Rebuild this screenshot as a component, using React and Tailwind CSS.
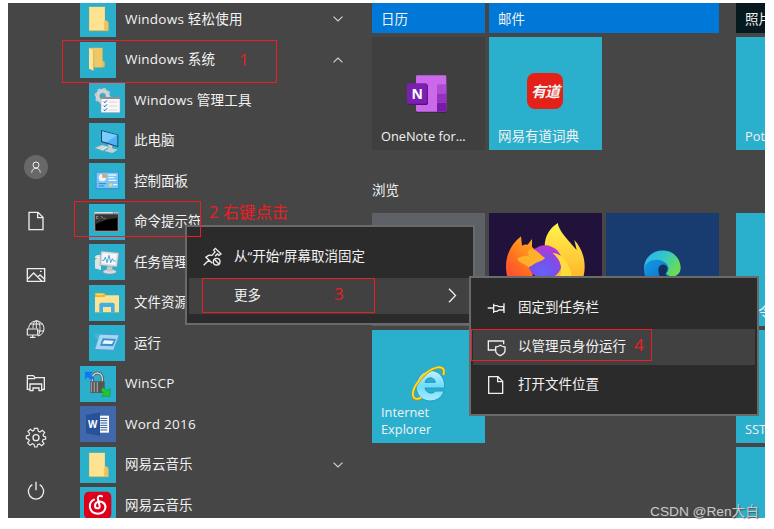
import React from "react";

const Folder = () => (
  <g>
    <path d="M27 17H75V58L85 66V90H27Z" fill="#e9c768" />
    <path d="M28 18H74V88H28Z" fill="#ffe391" />
    <path d="M73 64L78 57L85 63V88L82 90H73Z" fill="#ebc25d" />
    <path d="M27 89H84" stroke="#dcb34d" strokeWidth="2" />
  </g>
);
const OpenFolder = () => (
  <g>
    <path d="M28 17H68V56L74 59V76H38Z" fill="#e6bd55" />
    <path d="M40 18H66V76H40Z" fill="#edc867" />
    <path d="M27 18L41 25V86L27 80Z" fill="#ffe598" />
    <path d="M41 25V86" stroke="#cf9f3b" strokeWidth="2" />
  </g>
);
const Tools = () => (
  <g>
    <circle cx="41" cy="42" r="15" fill="none" stroke="#d0d5d8" strokeWidth="13" />
    <circle cx="41" cy="42" r="21" fill="none" stroke="#c3c9cd" strokeWidth="7" strokeDasharray="8.2 8.3" />
    <circle cx="41" cy="42" r="9" fill="none" stroke="#8b959b" strokeWidth="2" />
    <rect x="36" y="46" width="57" height="46" fill="#f7f7f7" stroke="#99a" strokeWidth="1.5" />
    <rect x="36" y="45" width="57" height="6" fill="#8a9096" />
    <path d="M44 59l4 3 6-7M44 71l4 3 6-7M44 83l4 3 6-7" fill="none" stroke="#2262b8" strokeWidth="3" />
    <path d="M60 60h24M60 72h24M60 84h24" stroke="#c9c9c9" strokeWidth="2" />
  </g>
);
const Pc = () => (
  <g>
    <path d="M36 21L88 35V73L36 57Z" fill="#24435e" />
    <path d="M39 25L85 37V69L39 54Z" fill="#4bb3f6" />
    <path d="M39 25L85 37L52 58L39 54Z" fill="#79ccff" />
    <path d="M58 64L70 68L69 76L86 80L70 90L46 84L57 78Z" fill="#c9d0d5" />
    <path d="M18 74L40 66L61 72L41 83Z" fill="#e1e5e8" stroke="#9aa4ab" strokeWidth="1.5" />
    <path d="M25 75l17-6M33 77l17-6" stroke="#b5bdc2" strokeWidth="2" />
  </g>
);
const Control = () => (
  <g>
    <rect x="20" y="26" width="70" height="53" rx="3" fill="#3793dc" />
    <rect x="23" y="29" width="64" height="46" fill="#7cc7f5" />
    <circle cx="40" cy="44" r="11" fill="#e8f5ff" />
    <path d="M40 44V32A12 12 0 0 1 52 44Z" fill="#f29b3c" />
    <path d="M58 36h24M58 44h18M58 52h24" stroke="#e9f6ff" strokeWidth="4" />
    <path d="M28 62h24M28 69h18" stroke="#2f86cf" strokeWidth="3" />
    <circle cx="65" cy="66" r="5" fill="#f6d567" />
    <path d="M72 65h13" stroke="#fff" strokeWidth="3" />
  </g>
);
const Cmd = () => (
  <g>
    <rect x="15" y="24" width="75" height="60" rx="2" fill="#8e9091" />
    <path d="M16 26H89" stroke="#dedede" strokeWidth="4" />
    <path d="M72 27h4M79 27h3M85 27h3" stroke="#38506a" strokeWidth="3" />
    <rect x="19" y="32" width="67" height="48" fill="#000" />
    <path d="M19 32H86V42Q49 45 19 61Z" fill="#343434" />
    <path d="M28 37h-6v6h6M33 38v1M33 42v1M37 36l6 8M45 43h2M49 43h2" fill="none" stroke="#ddd" strokeWidth="1.6" />
  </g>
);
const Task = () => (
  <g>
    <path d="M18 38L36 32V78L18 73Z" fill="#b9c0c3" />
    <path d="M18 38L24 33H40L36 39V78L18 73Z" fill="#dfe3e4" />
    <path d="M20 43v3" stroke="#2aa848" strokeWidth="4" />
    <path d="M36 21L90 26L84 69L33 64Z" fill="#d9dde0" stroke="#818b91" strokeWidth="1.5" />
    <path d="M41 27L84 31L79 62L38 58Z" fill="#eff9ff" />
    <path d="M39 49h6l4-10 5 17 6-22 5 22 5-12 4 7h6" fill="none" stroke="#3d91c8" strokeWidth="2.5" />
    <ellipse cx="62" cy="83" rx="20" ry="7" fill="#d8dcde" stroke="#8b979c" strokeWidth="1.5" />
    <path d="M54 67H70V82H54Z" fill="#c0c6c9" />
  </g>
);
const Explorer = () => (
  <g>
    <path d="M18 25H45L50 31H90V82H18Z" fill="#ffe394" />
    <path d="M18 25H45L50 31L47 36H18Z" fill="#f4b71c" />
    <path d="M22 29h20" stroke="#fff1bd" strokeWidth="2" />
    <path d="M31 82V57L35 53H73L77 57V82H66V66H42V82Z" fill="#42b0e3" />
    <path d="M18 82H31M77 82H90" stroke="#dbaa43" strokeWidth="2" />
  </g>
);
const Run = () => (
  <g>
    <path d="M30 26L93 28L76 77L15 75Z" fill="#4f9fd3" />
    <path d="M32 29L89 31L73 74L19 72Z" fill="#a5d6f2" />
    <path d="M41 40L81 42L72 64L33 62Z" fill="#3e8fcb" />
    <path d="M45 46L74 47L69 57L40 56Z" fill="#eaf8ff" />
    <path d="M16 29H31M18 34H29M22 39H28" stroke="#85cce8" strokeWidth="1.5" />
  </g>
);
const Scp = () => (
  <g>
    <path d="M37 49V36A15 15 0 0 1 67 36V49" fill="none" stroke="#555" strokeWidth="9" />
    <path d="M37 48V36A15 15 0 0 1 67 36V48" fill="none" stroke="#d3d3d3" strokeWidth="4" />
    <rect x="30" y="46" width="44" height="35" rx="3" fill="#555" />
    <path d="M34 48V79M43 48V79M52 48V79" stroke="#989898" strokeWidth="4" />
    <path d="M15 17H39L32 25L42 35L34 43L23 33L15 41Z" fill="#1476f2" />
    <path d="M90 91H64L72 83L62 72L70 64L82 75L90 67Z" fill="#22c62e" stroke="#108d20" strokeWidth="1.5" />
  </g>
);
const Word = () => (
  <g>
    <path d="M56 29H87V80H56Z" fill="#fff" />
    <path d="M61 37H82M61 44H82M61 51H82M61 58H82M61 65H82M61 72H82" stroke="#2b579a" strokeWidth="3" />
    <path d="M18 27L60 19V90L18 82Z" fill="#25539b" />
    <text x="38" y="65" fill="#fff" fontSize="29" fontWeight="700" textAnchor="middle" fontFamily="Open Sans, sans-serif">W</text>
  </g>
);
const Netease = () => (
  <g>
    <rect x="12" y="14" width="82" height="82" rx="15" fill="#dd001b" />
    <path d="M66 28C58 24 52 29 54 37L59 57C61 66 45 67 45 56C45 46 57 41 66 45C83 53 78 80 54 80C27 80 22 48 42 38" fill="none" stroke="#fff" strokeWidth="6" strokeLinecap="round" />
  </g>
);

const APPS = [
  { label: "Windows 轻松使用", icon: Folder, chev: "down", wide: true },
  { label: "Windows 系统", icon: OpenFolder, chev: "up", wide: true },
  { label: "Windows 管理工具", icon: Tools, sub: true, wide: true },
  { label: "此电脑", icon: Pc, sub: true },
  { label: "控制面板", icon: Control, sub: true },
  { label: "命令提示符", icon: Cmd, sub: true },
  { label: "任务管理器", icon: Task, sub: true },
  { label: "文件资源管理器", icon: Explorer, sub: true },
  { label: "运行", icon: Run, sub: true },
  { label: "WinSCP", icon: Scp, wide: true },
  { label: "Word 2016", icon: Word, bg: "bg-[#4168aa]", wide: true },
  { label: "网易云音乐", icon: Folder, chev: "down" },
  { label: "网易云音乐", icon: Netease },
];

function AppRow({ label, icon: Icon, chev, sub, wide, bg = "bg-[#2aafcd]" }) {
  return (
    <div className={`flex h-9 shrink-0 items-center gap-[9px] ${sub ? "pl-[9px]" : ""}`}>
      <svg viewBox="0 0 108 108" className={`h-9 w-9 shrink-0 ${bg}`}><Icon /></svg>
      <span className={`grow whitespace-nowrap pb-px ${wide ? "tracking-[0.24px]" : ""}`}>{label}</span>
      {chev && (
        <svg width="10" height="6" viewBox="0 0 10 6" fill="none" stroke="#d5d5d5" strokeWidth="1.1" className="mr-[29px]">
          <path d={chev === "down" ? "M.5 .6L5 5L9.5 .6" : "M.5 5.4L5 1L9.5 5.4"} />
        </svg>
      )}
    </div>
  );
}

const Rail = ({ children }) => (
  <svg width="24" height="24" viewBox="0 0 72 72" fill="none" stroke="#eee" strokeWidth="4" className="shrink-0">{children}</svg>
);

const PageGlyph = () => <path d="M15 10H42L57 25V62H15ZM41 11V26H56" />;

const Tile = ({ className = "", children, label }) => (
  <div className={`flex h-[113px] shrink-0 flex-col justify-end overflow-hidden ${className}`}>
    {children}
    {label && <div className="whitespace-pre px-[9px] pb-[5px] text-[12.8px] leading-[17px]">{label}</div>}
  </div>
);

const OneNote = () => (
  <svg viewBox="0 0 339 273" className="w-[113px] shrink-0">
    <rect x="132" y="118" width="91" height="110" rx="4" fill="#303030" />
    <rect x="132" y="115" width="91" height="109" rx="4" fill="#cc68ea" />
    <path d="M195 142H223V170H195Z" fill="#ae4bd5" />
    <path d="M195 170H223V197H195Z" fill="#9332bf" />
    <path d="M195 197H223V221Q223 224 220 224H195Z" fill="#7719aa" />
    <rect x="108" y="142" width="60" height="62" rx="5" fill="#53107a" />
    <rect x="105" y="139" width="61" height="61" rx="5" fill="#7b1fb0" />
    <text x="135.500" y="185" fontFamily="Open Sans, sans-serif" fontSize="42" fontWeight="700" textAnchor="middle" fill="#fff">N</text>
  </svg>
);

const Firefox = () => (
  <svg viewBox="0 0 339 339" className="h-[113px] w-[113px] shrink-0">
    <defs>
      <linearGradient id="flame" x1="0" y1="0" x2="0" y2="1"><stop stopColor="#fff44f" /><stop offset=".6" stopColor="#ffbd2e" /><stop offset="1" stopColor="#ff9640" /></linearGradient>
      <linearGradient id="fox" x1=".6" y1="0" x2="0" y2="1"><stop stopColor="#ffb21c" /><stop offset=".45" stopColor="#ff6b20" /><stop offset="1" stopColor="#ff2052" /></linearGradient>
      <radialGradient id="globe" cx=".45" cy=".75" r=".7"><stop stopColor="#6760ff" /><stop offset=".5" stopColor="#7650e8" /><stop offset="1" stopColor="#b43ad3" /></radialGradient>
    </defs>
    <path d="M167 101C167 66 185 44 206 30C211 54 231 75 263 111L256 81C275 102 287 129 287 161C287 230 232 272 170 272C145 272 110 258 90 240L200 170Z" fill="url(#flame)" />
    <path d="M96 70L99 98C108 94 112 94 116 95L129 78V101C134 108 141 112 149 114C120 165 122 230 180 272C101 272 52 225 51 164C50 128 65 94 96 70Z" fill="url(#fox)" />
    <circle cx="168" cy="148" r="51" fill="url(#globe)" />
    <path d="M84 137C94 129 108 128 119 128C114 115 119 108 134 109C149 116 158 130 168 134C165 141 153 145 145 148C134 153 130 158 119 163C113 154 91 151 84 137Z" fill="#ffb02a" />
    <path d="M190 120C213 137 224 163 211 195L250 202C247 155 219 120 190 120Z" fill="#ffdc3d" />
  </svg>
);

const Edge = () => (
  <svg viewBox="0 0 339 339" className="h-[113px] w-[113px] shrink-0">
    <defs>
      <linearGradient id="edgeTop" x1="0" y1="0" x2="1" y2=".5"><stop stopColor="#2fb4f0" /><stop offset=".5" stopColor="#31c5cf" /><stop offset="1" stopColor="#69dc55" /></linearGradient>
      <linearGradient id="edgeSide" x1="0" y1="0" x2="1" y2="1"><stop stopColor="#169be8" /><stop offset="1" stopColor="#0b5cb5" /></linearGradient>
    </defs>
    <path d="M114 168C114 98 220 92 224 164C224 194 186 196 178 185C180 180 188 174 186 163L150 140Z" fill="url(#edgeTop)" />
    <path d="M114 172C114 132 178 130 187 163C189 172 184 178 180 182L213 202C171 254 114 216 114 172Z" fill="url(#edgeSide)" />
    <path d="M158 178C154 162 164 153 175 155C184 157 189 168 179 180C177 185 182 190 190 192L206 205C184 217 160 202 158 178Z" fill="#10305f" />
  </svg>
);

const IeMark = () => (
  <svg viewBox="0 0 339 222" className="w-[113px] shrink-0">
    <defs><linearGradient id="ie" x1="0" y1="0" x2="0" y2="1"><stop stopColor="#c4f4ff" /><stop offset=".5" stopColor="#6fdcfa" /><stop offset="1" stopColor="#a5ecff" /></linearGradient></defs>
    <path fillRule="evenodd" d="M218 174H159C161 190 184 194 190 183H216C205 216 168 220 147 203C123 182 131 142 154 128C181 111 221 129 218 174ZM159 157H190C188 139 162 139 159 157Z" fill="url(#ie)" stroke="#2298c6" strokeWidth="3" />
    <path d="M214 136C226 99 178 108 143 150C112 188 118 219 148 204" fill="none" stroke="#b98a0c" strokeWidth="8" />
    <path d="M214 135C226 98 178 107 143 149C112 187 118 217 148 203" fill="none" stroke="#ffda26" strokeWidth="5.500" />
  </svg>
);

function MenuItem({ icon, children, active, arrow, gap = "ml-2" }) {
  return (
    <div className={`flex shrink-0 items-center pl-3 ${active ? "h-9 bg-[#414141]" : "h-[41.500px]"}`}>
      <svg width="24" height="24" viewBox="0 0 72 72" fill="none" stroke="#eee" strokeWidth="4" className="shrink-0">{icon}</svg>
      <span className={`${gap} grow whitespace-nowrap pb-0.5`}>{children}</span>
      {arrow && <svg width="9" height="15" viewBox="0 0 9 15" fill="none" stroke="#eee" strokeWidth="1.300" className="mr-[14px]"><path d="M1 .8L7.500 7.500L1 14.200" /></svg>}
    </div>
  );
}

export default function App() {
  return (
    <div className="relative h-[529px] w-[774px] overflow-hidden bg-white pl-2 pt-[3px] font-['Open_Sans','Noto_Sans_CJK_SC',sans-serif] text-[13.500px] leading-5 text-[#f2f2f2]">
      <div className="flex h-[515px] w-[757px] overflow-hidden bg-[#464646]">
        <nav className="flex w-[72px] shrink-0 flex-col items-center gap-[30px] pr-4 pt-[152px]">
          <div className="flex h-6 w-6 shrink-0 items-center justify-center rounded-full bg-[#686868]">
            <svg width="12" height="12" viewBox="0 0 12 12" fill="none" stroke="#eee" strokeWidth="1"><circle cx="6" cy="4" r="3" /><path d="M1.700 11.500C2 5.900 10 5.900 10.300 11.500" /></svg>
          </div>
          <Rail><PageGlyph /></Rail>
          <Rail><path d="M10 17H62V55H10ZM12 47L29 30L53 54M41 42L48 36L61 48" /><path d="M48 25h5" /></Rail>
          <Rail>
            <path d="M14 35A23 23 0 1 1 43 57M27 34C27 3 48 3 48 34C48 46 45 52 42 57M17 21H57M41 42H60M37 12V34" strokeWidth="3" />
            <path d="M10 36H41V54H10ZM26 54V61M18 61H34" strokeWidth="3.500" />
          </Rail>
          <Rail><path d="M18 55H10V14H28L33 20H61V55H53M10 23H31L34 20M18 59V39H53V59H45V51H27V59Z" /></Rail>
          <Rail>
            <path d="M31 10H41L43 19L48 21L55 16L62 23L57 30L59 34L65 36V42L57 44L55 49L60 56L53 62L46 57L41 59L39 66H32L30 58L25 56L18 61L11 54L16 47L14 43L7 41V33L15 31L17 26L12 19L19 13L26 18L30 16Z" strokeWidth="3.500" />
            <circle cx="36" cy="38" r="9" />
          </Rail>
          <Rail><path d="M25 17A23 23 0 1 0 47 17M36 8V34" /></Rail>
        </nav>

        <main className="-mt-0.5 flex w-[292px] shrink-0 flex-col gap-[4.500px]">
          {APPS.map((app, i) => <AppRow key={i} {...app} />)}
        </main>

        <section className="flex shrink-0 flex-col">
          <div className="grid grid-cols-[113px_230px] gap-1">
            <div className="flex h-[30px] items-center bg-[#0078d7] px-[9px] pt-0.5">日历</div>
            <div className="flex h-[30px] items-center bg-[#0078d7] px-[9px] pt-0.5">邮件</div>
          </div>
          <div className="mt-1 grid grid-cols-[113px_113px_113px] gap-1">
            <Tile className="bg-[#3f3f3f]" label="OneNote for..."><OneNote /></Tile>
            <Tile className="bg-[#2aafcd]">
              <div className="mb-[18px] ml-[38px] flex h-9 w-9 items-center justify-center rounded-lg bg-[#e32119] text-[15px] font-bold italic tracking-[-1px]">有道</div>
              <div className="px-[9px] pb-[5px] leading-[18px]">网易有道词典</div>
            </Tile>
          </div>
          <h2 className="mt-[30px] h-[33px] leading-5">浏览</h2>
          <div className="grid grid-cols-[113px_113px_113px] gap-1">
            <Tile className="bg-[#5d6066]" />
            <Tile className="bg-[#20123a]"><Firefox /></Tile>
            <Tile className="bg-[#183b70]"><Edge /></Tile>
            <Tile className="bg-[#2aafcd]" label={"Internet\nExplorer"}><IeMark /></Tile>
          </div>
        </section>

        <aside className="ml-[17px] flex w-[29px] shrink-0 flex-col gap-1 overflow-hidden">
          <div className="flex h-[30px] shrink-0 items-center overflow-hidden whitespace-nowrap bg-[#06191f] pl-[9px] pt-0.5">照片</div>
          <Tile className="bg-[#2aafcd]" label="PotPlayer" />
          <div className="h-[55px] shrink-0" />
          <Tile className="bg-[#2aafcd]"><span className="ml-[22px] pb-[4px]">令</span></Tile>
          <Tile className="bg-[#2aafcd]" label="SSTap" />
          <Tile className="bg-[#2aafcd]" />
        </aside>
      </div>

      <div className="absolute left-[185px] top-[225px] flex h-[100px] w-[290px] flex-col border-2 border-[#6a6a6a] bg-[#2b2b2b] px-0.5 pt-[9px]">
        <MenuItem gap="ml-[9px]" icon={<>
          <path d="M8 61L24 45M13 35L34 55M16 36C22 29 27 30 33 31L42 21L38 15L43 10L60 27L54 31L49 27L42 34" />
          <circle cx="47" cy="50" r="10" /><path d="M40 43L54 57" />
        </>}>从“开始”屏幕取消固定</MenuItem>
        <MenuItem gap="ml-[9px]" active arrow icon={null}>更多</MenuItem>
      </div>

      <div className="absolute left-[469px] top-[276px] flex h-[140px] w-[290px] flex-col border-2 border-[#6a6a6a] bg-[#2b2b2b] px-0.5 pt-[9px]">
        <MenuItem gap="ml-[9px]" icon={<path d="M8 36H26M26 23V51M27 29H36L42 32H56V42H42L36 46H27M57 22V51" />}>固定到任务栏</MenuItem>
        <MenuItem gap="ml-[9px]" active icon={<path d="M31 45H10V18H56V28M46 31C41 35 36 36 32 36V47C32 54 39 59 46 62C54 58 60 53 60 47V36C55 36 50 34 46 31Z" />}>以管理员身份运行</MenuItem>
        <MenuItem gap="ml-[9px]" icon={<path d="M11 11H39L53 25V61H11ZM38 12V26H52" />}>打开文件位置</MenuItem>
      </div>

      <div className="absolute left-[62px] top-[40px] h-[43px] w-[215px] border border-[#ee1c24]" />
      <div className="absolute left-[74px] top-[201px] h-[36px] w-[127px] border border-[#ee1c24]" />
      <div className="absolute left-[202px] top-[278px] h-[35px] w-[173px] border border-[#ee1c24]" />
      <div className="absolute left-[471px] top-[329px] h-[32px] w-[181px] border border-[#ee1c24]" />
      <div className="absolute left-[239px] top-[50px] text-[17px] text-[#ee1c24]">1</div>
      <div className="absolute left-[209px] top-[202px] whitespace-nowrap text-[16.400px] text-[#ee1c24]">2 右键点击</div>
      <div className="absolute left-[334px] top-[284px] text-[17px] text-[#ee1c24]">3</div>
      <div className="absolute left-[634px] top-[335px] text-[17px] text-[#ee1c24]">4</div>
      <div className="absolute left-[650px] top-[502px] whitespace-nowrap font-['Liberation_Sans','Noto_Sans_CJK_SC',sans-serif] text-[13.700px] text-[#c9c9c9] [text-shadow:1px_1px_1px_#555]">CSDN @Ren大白</div>
    </div>
  );
}
